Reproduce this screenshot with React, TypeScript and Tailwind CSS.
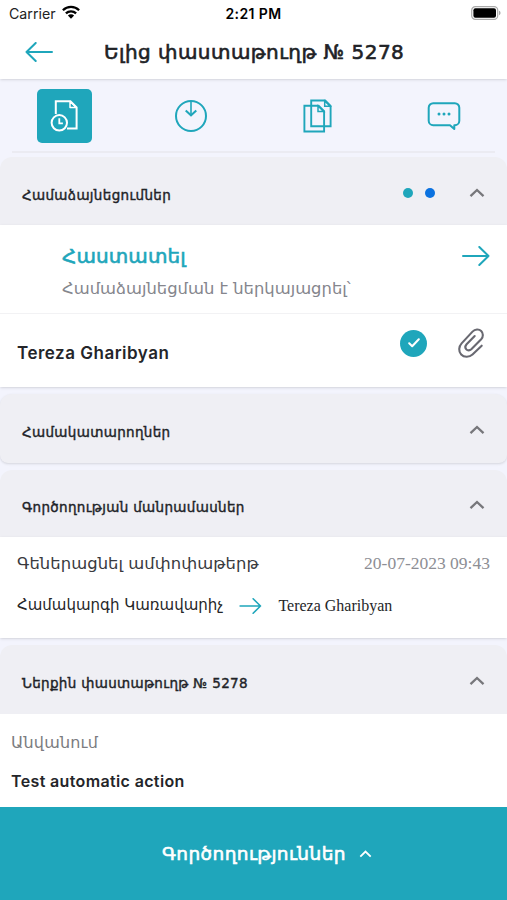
import type { ReactNode } from "react";
import { clsx } from "clsx";

interface SectionHeaderProps {
  title: string;
  className?: string;
  children?: ReactNode;
}

function Chevron({ className }: { className: string }) {
  return (
    <svg viewBox="0 0 16 10" fill="none" stroke="currentColor" className={className}>
      <path d="M1.5 8.2 8 2l6.5 6.2" strokeWidth="2.3" />
    </svg>
  );
}

function Arrow({ className }: { className: string }) {
  return (
    <svg
      viewBox="0 0 28 20"
      fill="none"
      stroke="currentColor"
      strokeWidth="2"
      strokeLinecap="round"
      strokeLinejoin="round"
      className={className}
    >
      <path d="M1 10h25.5M17.3 1l9.2 9-9.2 9" />
    </svg>
  );
}

function SectionHeader({ title, className, children }: SectionHeaderProps) {
  return (
    <div className={clsx("flex shrink-0 items-center justify-between rounded-t-xl bg-[#efeff4] px-[22px] pt-2", className)}>
      <h2 className="whitespace-nowrap text-[13.5px] tracking-[0.33px] text-[#212327] [-webkit-text-stroke:0.4px]">
        {title}
      </h2>
      <div className="flex items-center pb-[5px]">
        {children}
        <Chevron className="h-[10px] w-4 text-[#77777b]" />
      </div>
    </div>
  );
}

function StatusBar() {
  return (
    <div className="grid h-[27px] shrink-0 grid-cols-3 items-center pl-[9px] pr-[6px] font-['Inter',sans-serif]">
      <div className="flex items-center gap-[7px]">
        <span className="text-[14.2px] text-[#222]">Carrier</span>
        <svg viewBox="0 0 18 14" className="-ml-px -mt-[2px] h-[14px] w-[18px]" fill="none" stroke="#000" strokeWidth="2.3">
          <path d="M.9 5.2a11.6 11.6 0 0 1 16.2 0" />
          <path d="M3.9 8.4a7.3 7.3 0 0 1 10.2 0" />
          <path d="M9 13.7 5.9 10.5a4.4 4.4 0 0 1 6.2 0z" fill="#000" stroke="none" />
        </svg>
      </div>
      <span className="-ml-[3px] whitespace-nowrap text-center text-sm font-semibold tracking-[0.4px] text-black">2:21 PM</span>
      <svg viewBox="0 0 30 14" className="-mt-[2px] h-[14px] w-[30px] justify-self-end">
        <rect x=".7" y=".7" width="26" height="12.6" rx="3.6" fill="#fff" stroke="#aaa" strokeWidth="1.2" />
        <rect x="2.4" y="2.3" width="22.6" height="9.4" rx="2" fill="#000" />
        <path d="M28 4.8c2 .6 2 3.8 0 4.4z" fill="#aaa" />
      </svg>
    </div>
  );
}

function TabBar() {
  return (
    <div className="shrink-0">
      <nav className="grid h-[72px] grid-cols-4 place-items-center pl-px pt-[2px] text-[#1fa6bb]">
        <button type="button" className="flex h-[54px] w-[55px] items-center justify-center rounded-[5px] bg-[#1fa6bb] text-white">
          <svg viewBox="0 0 28 32" fill="none" stroke="currentColor" strokeWidth="2" className="h-8 w-7">
            <path d="M5.8 14V1.2h14.6l6.2 6.2v21.2H17" />
            <path d="M20 1.5v6h6.3z" strokeWidth="1.5" strokeLinejoin="round" />
            <circle cx="9.3" cy="22.8" r="7.7" />
            <path d="M9.3 18.3v5h3.6" strokeWidth="1.8" />
          </svg>
        </button>
        <svg viewBox="0 0 34 34" fill="none" stroke="currentColor" strokeWidth="2" className="h-[34px] w-[34px]">
          <circle cx="17" cy="17" r="15" />
          <path d="M17 2v13.5" strokeWidth="1.6" />
          <path d="m11.7 11.5 5.3 4.8 5.3-4.8" />
        </svg>
        <svg viewBox="0 0 29 34" fill="none" stroke="currentColor" strokeWidth="1.9" className="h-[34px] w-[29px]">
          <path d="M1.4 6.7h14.2l5.5 5.5v20.3H1.4z" />
          <path d="M15 7v5.5h5.7z" strokeWidth="1.5" />
          <path d="M8.2 26.8V1.5h14l5.4 5.5v20.2H8.2z" />
          <path d="M21.7 2v5.3h5.6z" strokeWidth="1.5" />
        </svg>
        <svg viewBox="0 0 34 30" fill="none" stroke="currentColor" strokeWidth="2" strokeLinejoin="round" className="h-[30px] w-[34px]">
          <path d="M6.2 2.2h21.6a4.500 4.500 0 0 1 4.500 4.500v13a4.500 4.500 0 0 1-4.500 4.500h-.5v3.900l-4.300-3.900H6.200a4.500 4.500 0 0 1-4.500-4.500v-13a4.500 4.500 0 0 1 4.500-4.500z" />
          <g fill="currentColor" stroke="none">
            <circle cx="12" cy="13" r="1.5" />
            <circle cx="17" cy="13" r="1.5" />
            <circle cx="22" cy="13" r="1.5" />
          </g>
        </svg>
      </nav>
      <div className="mx-3 h-[2px] bg-[#ebebf2]" />
    </div>
  );
}

export default function App() {
  return (
    <div className="flex h-[900px] w-[507px] flex-col overflow-hidden bg-[#f3f4fd] font-['DejaVu_Sans',sans-serif]">
      <header className="z-10 flex h-[79px] shrink-0 flex-col bg-white shadow-sm">
        <StatusBar />
        <div className="flex h-[50px] items-center pl-[25px]">
          <Arrow className="h-5 w-7 rotate-180 text-[#1fa6bb]" />
          <h1 className="ml-[51px] whitespace-nowrap text-[20px] tracking-[0.45px] text-[#202226] [-webkit-text-stroke:0.6px]">
            Ելից փաստաթուղթ № 5278
          </h1>
        </div>
      </header>

      <TabBar />

      <SectionHeader title="Համաձայնեցումներ" className="mt-1 h-[68px]">
        <span className="mr-3 h-[10px] w-[10px] rounded-full bg-[#1fa6bb]" />
        <span className="mr-[34px] h-[10px] w-[10px] rounded-full bg-[#0b72e0]" />
      </SectionHeader>
      <section className="flex h-[162px] shrink-0 flex-col bg-white shadow-sm">
        <div className="flex h-[89px] justify-between border-b border-[#f2f2f4] pl-[62px] pr-[17px] pt-[17px]">
          <div className="whitespace-nowrap">
            <p className="text-[20px] leading-7 tracking-[0.1px] text-[#1fa6bb] [-webkit-text-stroke:0.6px]">Հաստատել</p>
            <p className="mt-[7px] text-[16.4px] leading-6 text-[#85868d]">Համաձայնեցման է ներկայացրել՝</p>
          </div>
          <Arrow className="mt-1 h-5 w-7 text-[#1fa6bb]" />
        </div>
        <div className="flex h-[73px] items-center pl-[17px] pr-[23px]">
          <p className="flex-1 pt-[7px] font-['Inter',sans-serif] text-[17px] font-semibold tracking-[0.5px] text-[#242529]">
            Tereza Gharibyan
          </p>
          <span className="-mt-[15px] mr-[31px] flex h-[27px] w-[27px] items-center justify-center rounded-full bg-[#1fa6bb]">
            <svg viewBox="0 0 12 10" fill="none" stroke="#fff" strokeWidth="2" strokeLinecap="round" strokeLinejoin="round" className="h-[10px] w-3">
              <path d="m1.2 5.2 3 3 6.6-7" />
            </svg>
          </span>
          <svg viewBox="0 0 26 30" fill="none" stroke="#696971" strokeWidth="2.1" strokeLinecap="round" className="-mt-4 h-[30px] w-[26px]">
            <path d="M23.7 17.7 14.5 26.500C11.500 29.300 6 29.500 3.200 26.500.4 23.500.6 18.700 3.600 15.400L14.500 3.600C17 1 21 .8 23.200 3c2.200 2.200 2.200 5.900 0 8.300l-9.900 10c-1.500 1.400-3.700 1.500-5 .1-1.300-1.400-1.100-3.600.3-5.100L16.700 8" />
          </svg>
        </div>
      </section>

      <SectionHeader title="Համակատարողներ" className="mt-[7px] h-[69px] rounded-b-lg shadow-sm" />

      <SectionHeader title="Գործողության մանրամասներ" className="mt-[7px] h-[67px]" />
      <section className="flex h-[101px] shrink-0 flex-col whitespace-nowrap bg-white px-[17px] shadow-sm">
        <div className="flex h-[53px] items-center justify-between">
          <span className="pt-[2px] text-[16.4px] tracking-[0.06px] text-[#393a3e]">Գեներացնել ամփոփաթերթ</span>
          <span className="font-['Liberation_Serif',serif] text-[17.5px] text-[#8d8e94]">20-07-2023 09:43</span>
        </div>
        <div className="flex h-[31px] items-center text-[#252628]">
          <span className="text-[15px]">Համակարգի Կառավարիչ</span>
          <Arrow className="mx-4 h-4 w-[23px] text-[#1fa6bb]" />
          <span className="font-['Liberation_Serif',serif] text-base">Tereza Gharibyan</span>
        </div>
      </section>

      <SectionHeader title="Ներքին փաստաթուղթ № 5278" className="mt-[7px] h-[69px]" />
      <section className="flex h-[93px] shrink-0 flex-col bg-white pl-[11px] pt-[17px]">
        <p className="text-base leading-6 tracking-[0.2px] text-[#7b7c80]">Անվանում</p>
        <p className="mt-[14px] font-['Inter',sans-serif] text-base font-semibold leading-6 tracking-[0.36px] text-[#242529]">
          Test automatic action
        </p>
      </section>

      <button type="button" className="flex h-[93px] shrink-0 items-center bg-[#1fa6bb] pl-[162px] text-white">
        <span className="whitespace-nowrap text-[18.5px] tracking-[0.4px] [-webkit-text-stroke:0.6px]">Գործողություններ</span>
        <Chevron className="ml-[13px] h-[8px] w-[13px]" />
      </button>
    </div>
  );
}
